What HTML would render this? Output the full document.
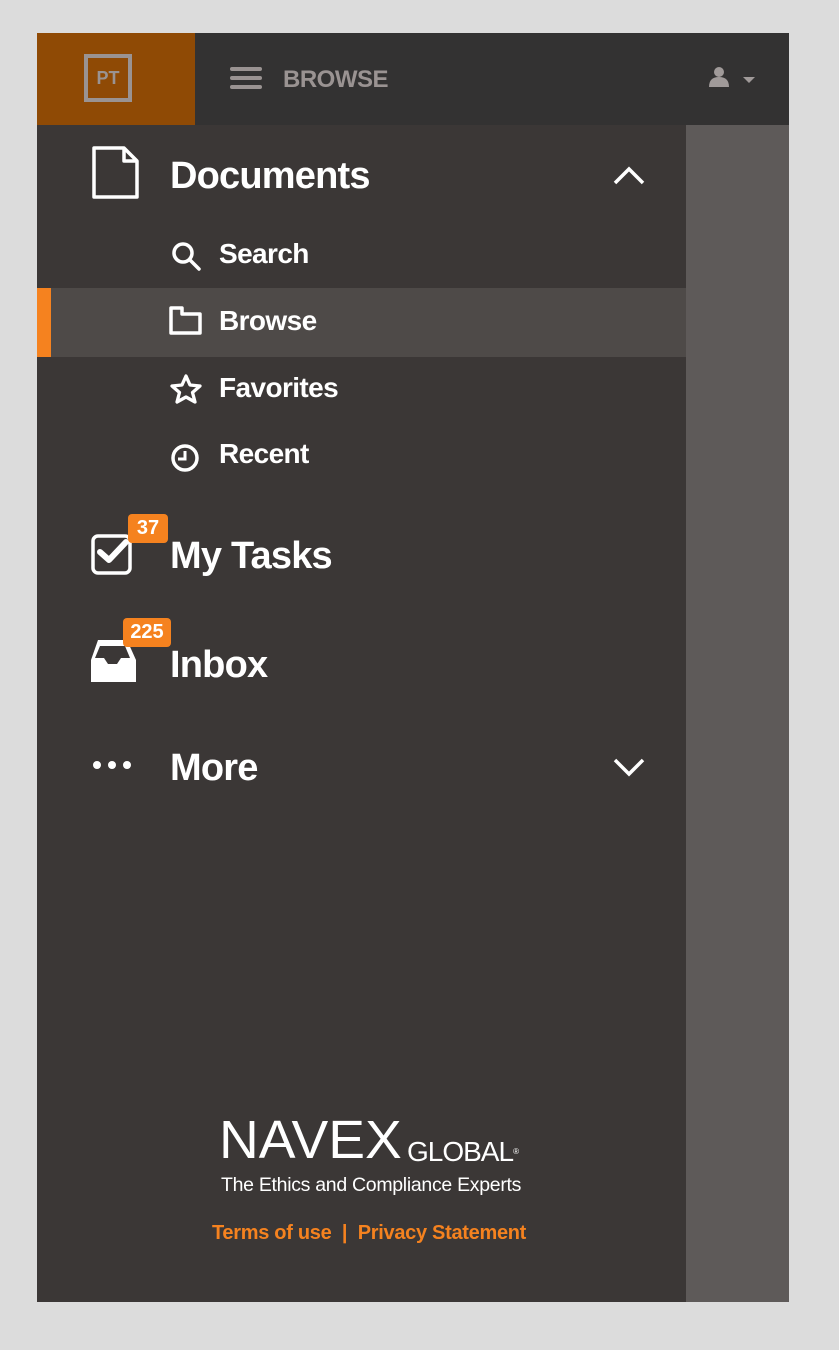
<!DOCTYPE html>
<html><head><meta charset="utf-8"><style>
*{margin:0;padding:0;box-sizing:border-box}
body{width:839px;height:1350px;background:#dcdcdc;font-family:"Liberation Sans",sans-serif;position:relative;overflow:hidden}
.app{position:absolute;left:37px;top:33px;width:752px;height:1269px;background:#3b3736}
.hdr{position:absolute;left:0;top:0;width:752px;height:92px;background:#333232}
.logo{position:absolute;left:0;top:0;width:158px;height:92px;background:#8f4a05}
.logo div{position:absolute;left:47px;top:21px;width:48px;height:48px;border:4px solid #9a9392;color:#9a9392;font-weight:bold;font-size:18px;text-align:center;line-height:40px}
.right{position:absolute;left:649px;top:92px;width:103px;height:1177px;background:#5e5a59}
.t{position:absolute;color:#fff;white-space:nowrap}
.big{font-size:38px;font-weight:bold;letter-spacing:-0.8px}
.sm{font-size:28px;font-weight:bold;letter-spacing:-0.6px}
.badge{position:absolute;background:#f5821f;color:#fff;font-size:20px;font-weight:bold;border-radius:4px;text-align:center;line-height:28px;height:29px}
</style></head><body>
<div class="app">
<div class="hdr">
 <div class="logo"><div>PT</div></div>
 <svg style="position:absolute;left:193px;top:33px" width="32" height="26"><g stroke="#9a9392" stroke-width="4" stroke-linecap="round"><line x1="2" y1="3" x2="30" y2="3"/><line x1="2" y1="12" x2="30" y2="12"/><line x1="2" y1="21" x2="30" y2="21"/></g></svg>
 <div class="t" style="left:246px;top:33px;font-size:24px;font-weight:bold;color:#9a9392;letter-spacing:-0.5px">BROWSE</div>
 <svg style="position:absolute;left:670px;top:33px" width="50" height="22"><circle cx="12" cy="6" r="5" fill="#a09a99"/><path d="M2 21 Q2 11 12 11 Q22 11 22 21Z" fill="#a09a99"/><path d="M36 11 L48 11 L42 17Z" fill="#a09a99"/></svg>
</div>
<div class="right"></div>
<div style="position:absolute;left:0;top:255px;width:649px;height:69px;background:#4e4a48"></div>
<div style="position:absolute;left:0;top:255px;width:14px;height:69px;background:#f5821f"></div>

<svg style="position:absolute;left:55px;top:113px" width="48" height="54"><path d="M2 2 H32 L45 15 V51 H2 Z M32 2 V15 H45" fill="none" stroke="#fff" stroke-width="3.5" stroke-linejoin="round"/></svg>
<div class="t big" style="left:133px;top:122px">Documents</div>
<svg style="position:absolute;left:575px;top:133px" width="34" height="20"><path d="M3 17 L17 3 L31 17" fill="none" stroke="#fff" stroke-width="3.5"/></svg>

<svg style="position:absolute;left:133px;top:207px" width="34" height="34"><circle cx="13" cy="13" r="9" fill="none" stroke="#fff" stroke-width="3.5"/><line x1="20" y1="20" x2="29" y2="29" stroke="#fff" stroke-width="3.5" stroke-linecap="round"/></svg>
<div class="t sm" style="left:182px;top:205px">Search</div>
<svg style="position:absolute;left:132px;top:272px" width="34" height="30"><path d="M2 3 H13 V9 H31 V28 H2 Z" fill="none" stroke="#fff" stroke-width="3.5" stroke-linejoin="round"/></svg>
<div class="t sm" style="left:182px;top:272px">Browse</div>
<svg style="position:absolute;left:133px;top:340px" width="34" height="32"><path d="M16 3 L20 12 L30 13 L22.5 19.5 L25 29 L16 24 L7 29 L9.5 19.5 L2 13 L12 12 Z" fill="none" stroke="#fff" stroke-width="3.3" stroke-linejoin="round"/></svg>
<div class="t sm" style="left:182px;top:339px">Favorites</div>
<svg style="position:absolute;left:133px;top:409px" width="32" height="32"><circle cx="15" cy="16" r="12" fill="none" stroke="#fff" stroke-width="3.5"/><path d="M15 9 V17 H8" fill="none" stroke="#fff" stroke-width="3"/></svg>
<div class="t sm" style="left:182px;top:405px">Recent</div>

<svg style="position:absolute;left:53px;top:495px" width="50" height="48"><rect x="3" y="8" width="37" height="37" rx="5" fill="none" stroke="#fff" stroke-width="3.5"/><path d="M10 24 L19 32 L36 14" fill="none" stroke="#fff" stroke-width="6" stroke-linecap="round" stroke-linejoin="round"/></svg>
<div class="badge" style="left:91px;top:481px;width:40px">37</div>
<div class="t big" style="left:133px;top:502px">My Tasks</div>

<svg style="position:absolute;left:52px;top:604px" width="50" height="48"><path d="M9 3 H38 L47 23 V45 H2 V23 Z" fill="#fff"/><path d="M11 9 H36 L41 21 H32 L28 27 H19 L15 21 H6 Z" fill="#3b3736"/></svg>
<div class="badge" style="left:86px;top:585px;width:48px">225</div>
<div class="t big" style="left:133px;top:611px">Inbox</div>

<svg style="position:absolute;left:55px;top:725px" width="42" height="14"><circle cx="5" cy="7" r="4" fill="#fff"/><circle cx="20" cy="7" r="4" fill="#fff"/><circle cx="35" cy="7" r="4" fill="#fff"/></svg>
<div class="t big" style="left:133px;top:714px">More</div>
<svg style="position:absolute;left:575px;top:724px" width="34" height="20"><path d="M3 3 L17 17 L31 3" fill="none" stroke="#fff" stroke-width="3.5"/></svg>

<div class="t" style="left:182px;top:1080px;font-size:58px;font-weight:normal;line-height:60px;transform:scale(0.95,0.92);transform-origin:left top">NAVEX</div>
<div class="t" style="left:370px;top:1103px;font-size:28px;line-height:32px;letter-spacing:-1px">GLOBAL<span style="font-size:8px;vertical-align:top">®</span></div>
<div class="t" style="left:184px;top:1141px;font-size:19.5px;letter-spacing:-0.3px">The Ethics and Compliance Experts</div>
<div class="t" style="left:175px;top:1189px;font-size:20px;font-weight:bold;color:#f5821f;letter-spacing:-0.3px">Terms of use &nbsp;|&nbsp; Privacy Statement</div>
</div>
</body></html>
